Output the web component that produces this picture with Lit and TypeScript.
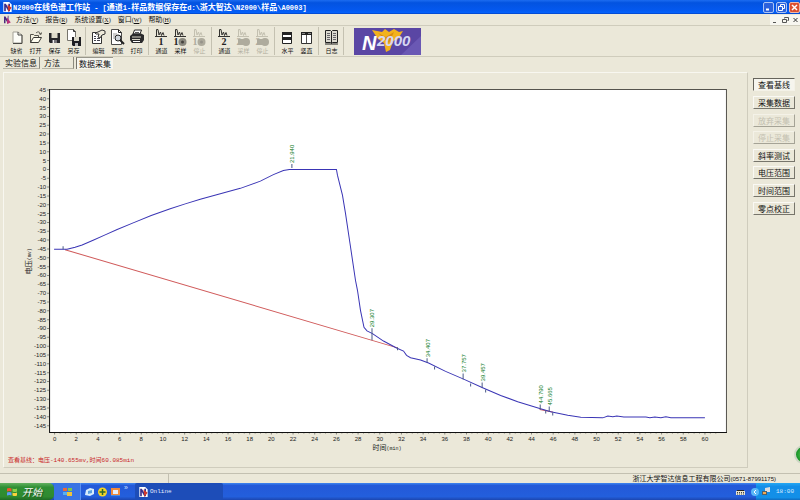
import { LitElement, html, svg, css, TemplateResult } from "lit";
import { customElement, property, state } from "lit/decorators.js";
import { classMap } from "lit/directives/class-map.js";

type Pt = [number, number];

const SIGNAL: Pt[] = [
  [54, 249], [63, 249], [67, 249], [75, 247], [82, 244.7], [93, 240], [105, 234.7], [117, 229.3], [133, 222.7],
  [151, 215.3], [170, 208.5], [185, 203.7], [200, 199], [220, 193.7], [240, 188.2], [260, 181], [273, 174.5],
  [283, 170.3], [289, 169.3], [336, 169.3], [337, 175], [342, 195], [345, 213], [349.5, 243],
  [355, 280], [357, 290], [360, 310], [363.5, 327], [366.5, 330.6], [372, 333.3], [383, 340.7],
  [396, 347.7], [403, 350.7], [406, 355], [410, 357.3], [420, 359.7], [428, 362.7], [445, 371],
  [463, 378.7], [482, 387.3], [500, 395], [517, 401.3], [530, 405.3], [539, 408], [550, 411.3],
  [567, 414.7], [580, 416.7], [602, 417.4], [607, 415.5], [612, 416.3], [616, 415.6], [623, 416.5],
  [645, 416.6], [649, 417.4], [654, 416.5], [660, 417.2], [665, 416.4], [670, 417.2], [686, 417.2],
  [704, 417.3],
];

const PEAKS = [
  { label: "21.940", x: 292, y: 163, foot: 168 },
  { label: "29.307", x: 372, y: 327, foot: 340 },
  { label: "34.407", x: 427, y: 357, foot: 362 },
  { label: "37.757", x: 463, y: 372, foot: 379 },
  { label: "39.457", x: 482, y: 381, foot: 387 },
  { label: "44.790", x: 540, y: 403, foot: 409 },
  { label: "45.665", x: 549, y: 405, foot: 411 },
];

const NOTCHES: Pt[] = [[63, 246], [397, 347], [434, 366], [470, 383], [485, 389], [545, 410], [552, 412]];

const trace = (x: number, color: string) => svg`
  <path d="M${x - 6} 8.500h12M${x - 4.5} 8V1.500l1.500 0 1 5.500 1.500-3 1 3.500 1.500-3 1 3" fill="none" stroke=${color}/>`;

const icons: Record<string, TemplateResult> = {
  fresh: svg`<path d="M6 4h5l4 3v8H6z" fill="#fdfdf8" stroke="#a5a398"/><path d="M11 4v3h4v8.500H6" fill="none" stroke="#4b4a46"/>`,
  open: svg`<path d="M4.500 14.500V6.500h3l1 1h4v2" fill="#f4f1df" stroke="#55534b"/><path d="M4.500 14.500l3-5h8l-3 5z" fill="#fffdf0" stroke="#3a3935"/><path d="M10 5c2-2 4-1 4.500 1M13 5.500l2 1 .5-2" fill="none" stroke="#55534b"/>`,
  save: svg`<path d="M4 5h11v10H5l-1-1z" fill="#26262a"/><path d="M6.500 5h6v5h-6z" fill="#dedbcb"/><path d="M7 12h5v3H7z" fill="#77757a"/><path d="M8 12h1v3H8z" fill="#eee"/>`,
  saveAs: svg`<path d="M3.500 1.500h6l2 2v9h-8z" fill="#fff" stroke="#76746c"/><path d="M9.500 1.500v2h2" fill="none" stroke="#333"/><path d="M8 9h9v9H9l-1-1z" fill="#1e1e22"/><path d="M10 9h5v4h-5z" fill="#dad7c8"/><path d="M11 15h3v3h-3z" fill="#bbb"/>`,
  edit: svg`<path d="M3.500 4.500h9v11h-9z" fill="#fff" stroke="#333"/><path d="M5 8.500h2M5 10.500h2M5 12.500h2M8 10.500h3M8 12.500h3" stroke="#44434f"/><path d="M6 5l3-1 4-2 3 1v3l-3 1-2 3-2-1 1-3H7z" fill="#eeeada" stroke="#333"/>`,
  preview: svg`<path d="M3.500 1.500h7l3 3v12h-10z" fill="#fff" stroke="#4a4a4a"/><path d="M10.500 1.500v3h3" fill="none" stroke="#222"/><path d="M5 6h4M5 8h2M5 10h1" stroke="#999"/><circle cx="10" cy="10" r="3" fill="#cfd5dc" stroke="#222"/><path d="M12 12l4 4" stroke="#222" stroke-width="2"/>`,
  print: svg`<path d="M6 6l1.500-4h7L13 6z" fill="#fff" stroke="#222"/><path d="M8 4.500h4" stroke="#555"/><path d="M3 8l3-2.500h8L17 7v5l-2 3H5l-2-3z" fill="#2a2a2c"/><path d="M5 9h9M5 11.500h8" stroke="#d9d6c8"/><path d="M6 13h7v1H6z" fill="#fff"/>`,
  channel1: svg`${trace(9, "#33322f")}<text class="digit" x="9" y="17" text-anchor="middle">1</text>`,
  sample1: svg`${trace(9, "#33322f")}<text class="digit" x="5" y="17" text-anchor="middle">1</text><circle cx="11.500" cy="14" r="4" fill="#8b897f"/><circle cx="11.500" cy="14" r="1.500" fill="#45433f"/>`,
  stop1: svg`${trace(9, "#c3c0b0")}<text class="digit off" x="5" y="17" text-anchor="middle">1</text><circle cx="11.500" cy="14" r="4" fill="#aeab9d"/><circle cx="11.500" cy="14" r="1.500" fill="#96938a"/>`,
  channel2: svg`${trace(9, "#33322f")}<text class="digit" x="9" y="17" text-anchor="middle">2</text>`,
  off2: svg`${trace(9, "#c3c0b0")}<text class="digit off" x="5" y="17" text-anchor="middle">2</text><circle cx="12" cy="14" r="4" fill="#aeab9d"/><path d="M4 11h5v6H4z" fill="#aeab9d"/>`,
  horizontal: svg`<path d="M4.500 4.500h9v11h-9z" fill="#fff" stroke="#222"/><path d="M4 4h10v3H4zM4 9h10v3H4z" fill="#222"/>`,
  vertical: svg`<path d="M4.500 4.500h10v11h-10z" fill="#fff" stroke="#333"/><path d="M4 4h11v3H4z" fill="#222"/><path d="M9.500 7v8" stroke="#555"/><path d="M5 5.500h3M11 5.500h3" stroke="#888"/>`,
  log: svg`<path d="M3.500 2.500h5l1 1 1-1h5v12h-5l-1 1-1-1h-5z" fill="#dcdad0" stroke="#222"/><path d="M9.500 3v12" stroke="#222"/><path d="M5 5.500h3M5 7.500h3M5 9.500h3M5 11.500h3M11 5.500h3M11 7.500h3M11 9.500h3M11 11.500h3" stroke="#67656a"/><path d="M3 16h13" stroke="#222"/>`,
};

interface Tool { icon: string; label: string; off?: boolean }

const TOOLS: Tool[][] = [
  [{ icon: "fresh", label: "缺省" }, { icon: "open", label: "打开" }, { icon: "save", label: "保存" }, { icon: "saveAs", label: "另存" }],
  [{ icon: "edit", label: "编辑" }, { icon: "preview", label: "预览" }, { icon: "print", label: "打印" }],
  [{ icon: "channel1", label: "通道" }, { icon: "sample1", label: "采样" }, { icon: "stop1", label: "停止", off: true }],
  [{ icon: "channel2", label: "通道" }, { icon: "off2", label: "采样", off: true }, { icon: "off2", label: "停止", off: true }],
  [{ icon: "horizontal", label: "水平" }, { icon: "vertical", label: "竖直" }],
  [{ icon: "log", label: "日志" }],
];

const MENUS: [string, string][] = [["方法", "V"], ["报告", "R"], ["系统设置", "X"], ["窗口", "W"], ["帮助", "H"]];

const ACTIONS = [
  { label: "查看基线" }, { label: "采集数据" }, { label: "放弃采集", off: true }, { label: "停止采集", off: true },
  { label: "斜率测试" }, { label: "电压范围" }, { label: "时间范围" }, { label: "零点校正" },
];

const appIcon = svg`<path d="M0 0h7l3 3v9H0z" fill="#fff"/><path d="M1 11V2h2l3 5V2h2v9H6L3 6v5z" fill="#3a2f8c"/><path d="M5 3l5 4-4 5z" fill="#d0392b"/>`;

@customElement("tool-button")
export class ToolButton extends LitElement {
  @property() icon = "";
  @property() label = "";
  @property({ type: Boolean }) off = false;

  static styles = css`
    :host { display: block; width: 19px; }
    button {
      display: flex; flex-direction: column; align-items: center; width: 100%; padding: 0; border: 0;
      background: none; color: #111; font: 6px/8px "Noto Sans CJK SC", sans-serif;
    }
    button:disabled { color: #b4b1a2; }
    svg { display: block; width: 19px; height: 19px; }
    .digit { font: bold 10px "Liberation Serif", serif; fill: #222; }
    .off { fill: #aeab9d; }
  `;

  render() {
    return html`<button type="button" ?disabled=${this.off}>
      <svg viewBox="0 0 19 19" aria-hidden="true">${icons[this.icon]}</svg><span>${this.label}</span>
    </button>`;
  }
}

@customElement("chromatogram-chart")
export class ChromatogramChart extends LitElement {
  static styles = css`
    :host { display: block; }
    svg { display: block; width: 100%; height: auto; }
    text { font: 6px "Liberation Sans", Arial, sans-serif; fill: #222; }
    .peak { fill: #0a7a1c; }
    .title { font: 7px "Noto Sans CJK SC", sans-serif; }
    .unit { font: 5px "Liberation Mono", monospace; }
    .frame { fill: #fff; }
    .thin { fill: none; stroke: #55534d; stroke-width: 1; }
    .axis { fill: none; stroke: #111; stroke-width: 1; }
    .tick { fill: none; stroke: #88867c; }
    .signal { fill: none; stroke: #3a35b5; stroke-width: 1; }
    .base { fill: none; stroke: #d05a5a; stroke-width: 1; }
    .mark { fill: none; stroke: #4a5a86; stroke-width: 1; }
  `;

  private yPos(v: number) { return 169.3 - v * 1.765; }
  private xPos(t: number) { return 54.5 + t * 10.825; }

  render() {
    const volts = Array.from({ length: 39 }, (_, i) => 45 - i * 5);
    const minutes = Array.from({ length: 31 }, (_, i) => i * 2);
    const minor = Array.from({ length: 123 }, (_, i) => i / 2).filter((t) => t <= 61.5);
    return html`<svg viewBox="4 73 742 382" role="img" aria-label="电压 时间">
      <rect class="frame" x="49" y="89" width="677" height="343"/>
      <path class="thin" d="M50 89.500H725.500V432"/>
      <path class="tick" d=${volts.map((v) => `M47 ${this.yPos(v)}h2`).join("")}/>
      <path class="tick" d=${minor.map((t) => `M${this.xPos(t)} 432v${t % 2 ? 1 : 2}`).join("")}/>
      <path class="axis" d="M49.500 89V432M49 432H726"/>
      ${volts.map((v) => svg`<text x="46" y=${this.yPos(v) + 2} text-anchor="end">${v}</text>`)}
      ${minutes.map((t) => svg`<text x=${this.xPos(t)} y="441" text-anchor="middle">${t}</text>`)}
      <path class="base" d="M65 249.500L397 347.500M539 409L552 411.500"/>
      <polyline class="signal" points=${SIGNAL.map((p) => p.join(",")).join(" ")}/>
      <path class="mark" d=${NOTCHES.map(([x, y]) => `M${x} ${y}v3`).join("")}/>
      ${PEAKS.map((p) => svg`
        <path class="mark" d="M${p.x - 0.5} ${p.y + 1}V${p.foot}"/>
        <text class="peak" transform="translate(${p.x + 2} ${p.y}) rotate(-90)">${p.label}</text>`)}
      <text class="title" x="372" y="450">时间<tspan class="unit">(min)</tspan></text>
      <text class="title" transform="translate(31 274) rotate(-90)">电压<tspan class="unit">(mv)</tspan></text>
    </svg>`;
  }
}

@customElement("app-root")
export class AppRoot extends LitElement {
  @state() private action = 0;
  @state() private tab = 2;

  static styles = css`
    :host {
      display: flex; flex-direction: column; position: relative; min-height: 100vh; overflow: hidden;
      background: #ebe8d9; color: #111; font: 7px/10px "Liberation Sans", "Noto Sans CJK SC", sans-serif;
    }
    button { font: inherit; color: inherit; padding: 0; border: 0; background: none; }
    svg { display: block; }
    .spacer { flex: 1; }

    .titlebar {
      display: flex; align-items: center; height: 14px; padding-left: 3px; gap: 1px;
      background: linear-gradient(#1c6cf0, #0353e0 20%, #0458ee 70%, #0361fb 90%, #0340c0);
      color: #fff; font-weight: bold;
    }
    .titlebar .icon { width: 9px; height: 10px; }
    h1 { margin: 0; font: bold 8px/12px "Noto Sans CJK SC", sans-serif; white-space: pre; }
    h1 .lat { font: bold 7px/12px "Liberation Mono", monospace; }
    .winbtns { display: flex; gap: 2px; }
    .winbtns button { width: 11px; height: 11px; border: 1px solid #a9c3f5; border-radius: 2px; background: #2b61dc; }
    .winbtns .close { background: #dc5030; border-color: #f0b9a8; }
    .winbtns svg { width: 9px; height: 9px; }

    .menubar { display: flex; align-items: center; height: 11px; padding-left: 3px; gap: 7px; border-bottom: 1px solid #cfccbc; }
    .menubar .icon { width: 8px; height: 9px; margin-right: -2px; }
    .menubar button { font: 6px/10px "Liberation Serif", serif; }
    .menubar .cjk { font: 7px/10px "Noto Sans CJK SC", sans-serif; }
    .mdi { display: flex; background: #f7f6f0; }
    .mdi svg { width: 10px; height: 10px; }

    .toolbar { display: flex; align-items: center; height: 30px; padding-left: 7px; border-bottom: 1px solid #cfccbc; }
    .group { display: flex; }
    .sep { width: 1px; height: 28px; margin: 0 3px 0 2px; background: #c4c1b1; }
    .logo { width: 67px; height: 27px; margin-left: 7px; }
    .logo text { font: italic bold 20px "Liberation Sans", sans-serif; fill: #fff; }
    .logo .small { font-size: 15px; fill: #d6d8f2; }

    .tabs { display: flex; gap: 2px; padding: 0 3px 3px; }
    .tabs button {
      padding: 0 2px; min-width: 32px; height: 12px; text-align: left;
      font: 8px/11px "Noto Sans CJK SC", sans-serif;
      border-right: 1px solid #8c8a7e; border-bottom: 1px solid #b7b4a6;
    }
    .tabs .on { background: #f6f5ee; border: 0; border-left: 1px solid #77756c; border-top: 1px solid #99978c; }

    .body { display: flex; align-items: flex-start; flex: 1; padding: 0 0 0 3px; gap: 5px; }
    .panel { flex: 1; min-width: 0; border: 1px solid #cfccbd; border-top-color: #f8f7f0; border-left-color: #f8f7f0; }
    .readout { margin: 0; padding: 0 4px 2px; height: 9px; color: #c81e28; font: 6px/9px "Liberation Mono", "Noto Sans CJK SC", monospace; }
    .actions {
      display: grid; grid-template-rows: repeat(8, 1fr); align-items: center; height: 141px;
      width: 42px; margin: 4px 5px 0 0;
    }
    .actions button {
      height: 13px; font: 8px/11px "Noto Sans CJK SC", sans-serif; white-space: nowrap;
      border: 1px solid; border-color: #faf9f4 #77756b #77756b #faf9f4;
    }
    .actions button:disabled { color: #c3c0b1; border-color: #f4f2e8 #a5a396 #a5a396 #f4f2e8; }
    .actions .on { background: #f6f5ee; border-color: #66645c #f4f2e8 #f4f2e8 #66645c; }

    .status { display: flex; height: 9px; border-top: 1px solid #c3c0b1; margin-top: 4px; }
    .status .cell { width: 168px; border-right: 1px solid #c3c0b1; }
    .status .firm { margin-right: 24px; font: 7px/9px "Noto Sans CJK SC", sans-serif; white-space: nowrap; }
    .status .lat { font: 6px/9px "Liberation Sans", sans-serif; }

    .taskbar {
      display: flex; align-items: stretch; height: 17px;
      background: linear-gradient(#3f86f0, #2459d8 15%, #235fdc 80%, #1c46b0);
    }
    .start {
      display: flex; align-items: center; gap: 5px; width: 54px; padding-left: 7px; color: #fff;
      background: linear-gradient(#63b060, #2f8f34 25%, #2f8a30 80%, #1f6a24); border-radius: 0 5px 5px 0;
      font: italic 10px/14px "Noto Sans CJK SC", sans-serif; text-shadow: 1px 1px 1px #1c4a1c;
    }
    .start svg { width: 10px; height: 10px; }
    .quick { display: flex; align-items: center; width: 81px; }
    .quick .hot { width: 26px; height: 100%; display: grid; place-items: center; background: #3a74e4; border-right: 1px solid #5a92f4; margin-right: 2px; }
    .quick svg { width: 9px; height: 10px; }
    .quick button { width: 13px; display: grid; place-items: center; }
    .quick .more { color: #cfe0ff; font-size: 7px; line-height: 10px; align-self: flex-start; margin-left: 2px; }
    .task {
      display: flex; align-items: center; gap: 2px; width: 88px; padding-left: 4px; color: #e4ecff;
      background: #1d4db8; font: 6px/12px "Liberation Mono", monospace; border-radius: 2px;
    }
    .task svg { width: 9px; height: 10px; }
    .keyboard { width: 9px; height: 9px; align-self: center; margin-right: 11px; }
    .tray {
      display: flex; align-items: center; gap: 6px; padding: 0 6px 0 0; color: #dcecff;
      background: linear-gradient(#25a8f4, #138ee8 20%, #1290e8 85%, #0f6cc0);
      font: 6px/12px "Liberation Mono", monospace;
    }
    .tray .chev { width: 8px; height: 10px; margin-left: -5px; }
    .tray .net { width: 8px; height: 9px; margin-left: -3px; }
    .bubble {
      position: absolute; right: -13px; bottom: 36px; width: 15px; height: 15px; border-radius: 50%;
      background: radial-gradient(#5fc95a, #1f9a2c 60%, #157a20); border: 2px solid #cdd6c4;
    }
  `;

  render() {
    return html`
      <header class="titlebar">
        <svg class="icon" viewBox="0 0 10 12" aria-hidden="true">${appIcon}</svg>
        <h1><span class="lat">N2000</span>在线色谱工作站<span class="lat"> - [</span>通道<span class="lat">1-</span>样品数据保存在<span class="lat">d:\\</span>浙大智达<span class="lat">\\N2000\\</span>样品<span class="lat">\\A0003]</span></h1>
        <span class="spacer"></span>
        <div class="winbtns">
          <button type="button" aria-label="最小化"><svg viewBox="0 0 9 9"><path d="M2 6.500h3" stroke="#fff" stroke-width="2"/></svg></button>
          <button type="button" aria-label="还原"><svg viewBox="0 0 9 9"><path d="M3.500 3V1.500h4v4H6M1.500 3.500h4v4h-4z" fill="none" stroke="#fff"/></svg></button>
          <button type="button" class="close" aria-label="关闭"><svg viewBox="0 0 9 9"><path d="M2 2l5 5M7 2l-5 5" stroke="#fff" stroke-width="1.500"/></svg></button>
        </div>
      </header>

      <nav class="menubar">
        <svg class="icon" viewBox="0 0 10 12" aria-hidden="true"><path d="M1 11V2h2l3 5V1h1v10H6L3 6v5z" fill="#4a2a7c"/><path d="M5 3l5 7-5 2z" fill="#b8307a"/></svg>
        ${MENUS.map(([name, key]) => html`<button type="button"><span class="cjk">${name}</span>(<u>${key}</u>)</button>`)}
        <span class="spacer"></span>
        <div class="mdi">
          <button type="button" aria-label="最小化窗口"><svg viewBox="0 0 10 10"><path d="M3 7.500h3" stroke="#555"/></svg></button>
          <button type="button" aria-label="还原窗口"><svg viewBox="0 0 10 10"><path d="M4.500 3.500v-1h4v3h-1M2.500 4.500h4v3h-4z" fill="none" stroke="#555"/></svg></button>
          <button type="button" aria-label="关闭窗口"><svg viewBox="0 0 10 10"><path d="M3.500 3l4 4M7.500 3l-4 4" stroke="#333"/></svg></button>
        </div>
      </nav>

      <div class="toolbar">
        ${TOOLS.map((group) => html`
          <div class="group">${group.map((t) => html`<tool-button .icon=${t.icon} .label=${t.label} .off=${!!t.off}></tool-button>`)}</div>
          <span class="sep"></span>`)}
        <svg class="logo" viewBox="0 0 67 27" role="img" aria-label="N2000">
          <rect width="67" height="27" fill="#5a46a4"/>
          <path d="M0 0h67v27h-20L67 8V0z" fill="#6a58b4"/>
          <path d="M18 2l10 2 3-3 4 3 5-3 5 3 4-1-5 8-5 2-3 9-4 2-2-9-6-4z" fill="#f2b21c"/>
          <path d="M24 5l8 4 8-5-5 11z" fill="#d98a10"/>
          <text x="8" y="22">N</text><text class="small" x="23" y="18">2000</text>
        </svg>
      </div>

      <div class="tabs" role="tablist">
        ${["实验信息", "方法", "数据采集"].map((name, i) => html`
          <button type="button" role="tab" aria-selected=${this.tab === i} class=${classMap({ on: this.tab === i })}
            @click=${() => (this.tab = i)}>${name}</button>`)}
      </div>

      <main class="body">
        <section class="panel">
          <chromatogram-chart></chromatogram-chart>
          <p class="readout">查看基线：电压-140.655mv,时间60.085min</p>
        </section>
        <div class="actions">
          ${ACTIONS.map((a, i) => html`
            <button type="button" ?disabled=${!!a.off} class=${classMap({ on: this.action === i })}
              @click=${() => (this.action = i)}>${a.label}</button>`)}
        </div>
      </main>

      <footer class="status">
        <span class="cell"></span><span class="spacer"></span>
        <span class="firm">浙江大学智达信息工程有限公司<span class="lat">(0571-87991175)</span></span>
      </footer>

      <div class="taskbar">
        <button type="button" class="start">
          <svg viewBox="0 0 10 10" aria-hidden="true"><path d="M0 1.500q2-1 4.500 0v3Q2 3.500 0 4.500z" fill="#f0562c"/><path d="M5.500 1.500q2 1 4.500 0v3q-2 1-4.500 0z" fill="#8cd04a"/><path d="M0 5.500q2-1 4.500 0v3q-2-1-4.500 0z" fill="#5a9cf4"/><path d="M5.500 5.500q2 1 4.500 0v3q-2 1-4.500 0z" fill="#fbd23c"/></svg>
          <span>开始</span>
        </button>
        <div class="quick">
          <span class="hot"><svg viewBox="0 0 9 10" aria-hidden="true"><path d="M0 1h4v3H0z" fill="#e8693c"/><path d="M5 1h4v3H5z" fill="#7cc84c"/><path d="M0 5h4v3H0z" fill="#58b0f0"/><path d="M4 5h5v4H4z" fill="#f0c43a"/></svg></span>
          <button type="button" aria-label="桌面"><svg viewBox="0 0 9 10"><path d="M1 3l4-2 4 1v5L5 9 0 8z" fill="#d8ecfc"/><path d="M3 4l4-1v3L3 7z" fill="#5aa0e0"/></svg></button>
          <button type="button" aria-label="添加"><svg viewBox="0 0 9 10"><circle cx="4.500" cy="5" r="4.500" fill="#f4d428"/><path d="M4.500 2v6M1.500 5h6" stroke="#2c6a2c" stroke-width="1.500"/></svg></button>
          <button type="button" aria-label="播放器"><svg viewBox="0 0 9 10"><path d="M0 1h9v8H0z" fill="#f08a3c"/><path d="M2 3h5v4H2z" fill="#e8f0fa"/><path d="M0 8h9v1H0z" fill="#4a8ae0"/></svg></button>
          <span class="more">»</span>
        </div>
        <button type="button" class="task"><svg viewBox="0 0 10 12" aria-hidden="true">${appIcon}</svg><span>Online</span></button>
        <span class="spacer"></span>
        <svg class="keyboard" viewBox="0 0 9 9" aria-hidden="true"><path d="M1 3h7v1H1z" fill="#222"/><path d="M0 4h9v4H0z" fill="#e8e4d0"/><path d="M1 5.500h7M1 7h7" stroke="#444" stroke-dasharray="1 1"/></svg>
        <div class="tray">
          <svg class="chev" viewBox="0 0 8 10" aria-hidden="true"><circle cx="4" cy="5" r="4" fill="#5ab8f8"/><path d="M5 3L3 5l2 2" fill="none" stroke="#fff"/></svg>
          <svg class="net" viewBox="0 0 8 9" aria-hidden="true"><path d="M3 1l5-1v5H3z" fill="#d8dce0"/><path d="M0 4h5v4H0z" fill="#50606a"/><path d="M1 5h3v2H1z" fill="#f0a850"/></svg>
          <time>18:00</time>
        </div>
      </div>
      <span class="bubble"></span>
    `;
  }
}
